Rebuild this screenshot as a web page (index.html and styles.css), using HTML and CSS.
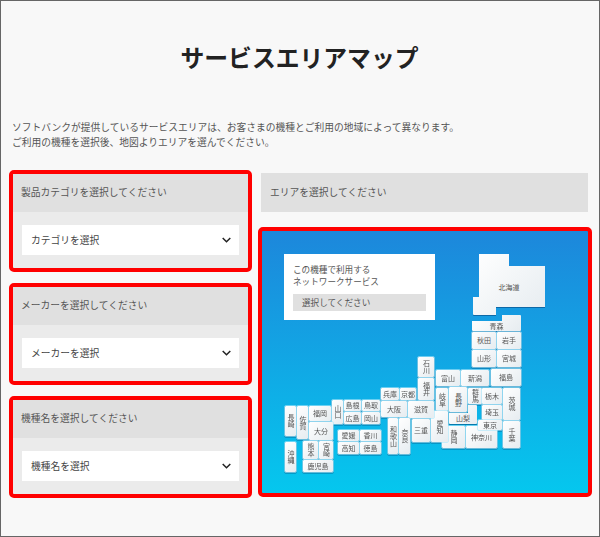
FILE: index.html
```html
<!DOCTYPE html>
<html>

<head>
    <meta charset="utf-8">
    <title>サービスエリアマップ</title>
    <link rel="stylesheet" href="styles.css">
</head>

<body>
    <div id="page">
        <h1>サービスエリアマップ</h1>
        <p class="lead">ソフトバンクが提供しているサービスエリアは、お客さまの機種とご利用の地域によって異なります。<br>ご利用の機種を選択後、地図よりエリアを選んでください。</p>
        <div class="columns">
            <div class="left">
                <div class="card">
                    <div class="card-head">製品カテゴリを選択してください</div>
                    <div class="card-body">
                        <div class="select">カテゴリを選択
                            <svg class="chevron" width="9" height="6" viewBox="0 0 9 6"><path d="M.7 1l3.8 3.8L8.3 1" /></svg>
                        </div>
                    </div>
                </div>
                <div class="card">
                    <div class="card-head">メーカーを選択してください</div>
                    <div class="card-body">
                        <div class="select">メーカーを選択
                            <svg class="chevron" width="9" height="6" viewBox="0 0 9 6"><path d="M.7 1l3.8 3.8L8.3 1" /></svg>
                        </div>
                    </div>
                </div>
                <div class="card">
                    <div class="card-head">機種名を選択してください</div>
                    <div class="card-body">
                        <div class="select">機種名を選択
                            <svg class="chevron" width="9" height="6" viewBox="0 0 9 6"><path d="M.7 1l3.8 3.8L8.3 1" /></svg>
                        </div>
                    </div>
                </div>
            </div>
            <div class="right">
                <div class="area-head">エリアを選択してください</div>
                <div class="map">
                    <div class="info">
                        <p>この機種で利用する<br>ネットワークサービス</p>
                        <div class="info-value">選択してください</div>
                    </div>
                    <div class="tiles">
                        <div class="tile hokkaido">北海道</div>
                        <div class="tile aomori">青森</div>
                        <div class="tile akita">秋田</div>
                        <div class="tile iwate">岩手</div>
                        <div class="tile yamagata">山形</div>
                        <div class="tile miyagi">宮城</div>
                        <div class="tile fukushima">福島</div>
                        <div class="tile niigata">新潟</div>
                        <div class="tile toyama">富山</div>
                        <div class="tile tate ishikawa">石川</div>
                        <div class="tile tate fukui">福井</div>
                        <div class="tile tate gifu">岐阜</div>
                        <div class="tile yamanashi">山梨</div>
                        <div class="tile tate nagano">長野</div>
                        <div class="tile tate gunma">群馬</div>
                        <div class="tile tochigi">栃木</div>
                        <div class="tile saitama">埼玉</div>
                        <div class="tile tate ibaraki">茨城</div>
                        <div class="tile tate chiba">千葉</div>
                        <div class="tile kanagawa">神奈川</div>
                        <div class="tile tokyo">東京</div>
                        <div class="tile tate shizuoka">静岡</div>
                        <div class="tile tate aichi">愛知</div>
                        <div class="tile mie">三重</div>
                        <div class="tile shiga">滋賀</div>
                        <div class="tile osaka">大阪</div>
                        <div class="tile hyogo">兵庫</div>
                        <div class="tile kyoto">京都</div>
                        <div class="tile tate wakayama">和歌山</div>
                        <div class="tile tate nara">奈良</div>
                        <div class="tile tottori">鳥取</div>
                        <div class="tile shimane">島根</div>
                        <div class="tile okayama">岡山</div>
                        <div class="tile hiroshima">広島</div>
                        <div class="tile tate yamaguchi">山口</div>
                        <div class="tile kagawa">香川</div>
                        <div class="tile ehime">愛媛</div>
                        <div class="tile tokushima">徳島</div>
                        <div class="tile kochi">高知</div>
                        <div class="tile oita">大分</div>
                        <div class="tile fukuoka">福岡</div>
                        <div class="tile tate saga">佐賀</div>
                        <div class="tile tate nagasaki">長崎</div>
                        <div class="tile tate kumamoto">熊本</div>
                        <div class="tile tate miyazaki">宮崎</div>
                        <div class="tile kagoshima">鹿児島</div>
                        <div class="tile tate okinawa">沖縄</div>
                    </div>
                </div>
            </div>
        </div>
    </div>
</body>

</html>
```

FILE: styles.css
```css
/* General Styles */
* {
    box-sizing: border-box;
}

html,
body {
    margin: 0;
    height: 100%;
}

body {
    color: #444;
    font-family: "Noto Sans CJK JP", "Noto Sans", sans-serif;
}

#page {
    height: 537px;
    padding: 0 7px 0 8px;
    background-color: #f8f8f8;
    border: 1px solid #666;
}

h1 {
    margin: 0;
    padding: 39px 2px 0 0;
    height: 119px;
    font-size: 23.8px;
    line-height: 34px;
    font-weight: bold;
    text-align: center;
    color: #222;
}

.lead {
    margin: 0 0 20px 3px;
    font-size: 9.75px;
    line-height: 15px;
    color: #555;
}

.columns {
    display: flex;
    gap: 6px;
}

/* Left column */
.left {
    width: 243px;
    display: flex;
    flex-direction: column;
    gap: 11px;
}

.card {
    height: 102px;
    border: 4px solid #f00;
    border-radius: 5px;
    background-color: #ebebeb;
}

.card-head {
    height: 38px;
    padding-left: 8px;
    background-color: #e0e0e0;
    font-size: 9.75px;
    line-height: 37px;
    color: #555;
}

.card-body {
    padding: 13px 9px 0 9px;
}

.select {
    height: 30px;
    padding: 0 8px 0 9px;
    display: flex;
    align-items: center;
    justify-content: space-between;
    background-color: #fff;
    font-size: 9.75px;
    color: #444;
}

.chevron path {
    fill: none;
    stroke: #222;
    stroke-width: 1.5;
}

/* Right column */
.right {
    width: 334px;
}

.area-head {
    height: 39px;
    margin: 3px 4px 15px 3px;
    padding-left: 9px;
    background-color: #e0e0e0;
    font-size: 9.75px;
    line-height: 38px;
    color: #555;
}

.map {
    position: relative;
    height: 270px;
    border: 4px solid #f00;
    border-radius: 5px;
    background: linear-gradient(#1d87db, #05c7ee);
}

.info {
    position: absolute;
    left: 22px;
    top: 23px;
    width: 151px;
    height: 66px;
    padding: 9px 9px 0 9px;
    background-color: #fff;
    font-size: 8.6px;
    color: #555;
}

.info p {
    margin: 0 0 7px 0;
    line-height: 12px;
}

.info-value {
    height: 17px;
    padding-left: 9px;
    background-color: #e0e0e0;
    line-height: 17px;
}

/* Prefecture tiles */
.tiles {
    filter: drop-shadow(0 1px 0 rgba(0, 30, 80, 0.4));
}

.tile {
    position: absolute;
    display: flex;
    align-items: center;
    justify-content: center;
    border-radius: 1px;
    background: linear-gradient(135deg, #fff, #e6ecf0);
    outline: 1px solid rgba(170, 230, 250, 0.6);
    font-size: 7px;
    line-height: 1;
    color: #555;
}

.tate {
    writing-mode: vertical-rl;
}

.hokkaido { left: 211px; top: 23px; width: 72px; height: 61px; padding-top: 5px; clip-path: polygon(6px 0, 36px 0, 36px 12px, 72px 12px, 72px 53px, 23px 53px, 23px 61px, 0 61px, 0 43px, 6px 43px); }
.aomori { left: 210px; top: 84px; width: 49px; height: 16px; padding-top: 6px; clip-path: polygon(30px 0, 49px 0, 49px 16px, 0 16px, 0 6px, 30px 6px); }
.akita { left: 210px; top: 101px; width: 24px; height: 17px; }
.iwate { left: 235px; top: 101px; width: 24px; height: 17px; }
.yamagata { left: 210px; top: 119px; width: 24px; height: 17px; }
.miyagi { left: 235px; top: 119px; width: 24px; height: 17px; }
.fukushima { left: 229px; top: 138px; width: 30px; height: 17px; }
.niigata { left: 199px; top: 139px; width: 28px; height: 16px; }
.toyama { left: 174px; top: 139px; width: 24px; height: 16px; }
.ishikawa { left: 156px; top: 126px; width: 16px; height: 20px; }
.fukui { left: 156px; top: 147px; width: 16px; height: 22px; }
.gifu { left: 174px; top: 157px; width: 12px; height: 23px; }
.nagano { left: 187px; top: 156px; width: 18px; height: 25px; }
.yamanashi { left: 187px; top: 174px; width: 28px; height: 19px; padding-top: 8px; clip-path: polygon(19px 0, 28px 0, 28px 19px, 0 19px, 0 8px, 19px 8px); }
.gunma { left: 206px; top: 157px; width: 14px; height: 16px; }
.tochigi { left: 220px; top: 157px; width: 20px; height: 16px; }
.saitama { left: 220px; top: 174px; width: 20px; height: 15px; }
.ibaraki { left: 241px; top: 157px; width: 17px; height: 32px; }
.chiba { left: 241px; top: 190px; width: 17px; height: 27px; }
.kanagawa { left: 204px; top: 195px; width: 31px; height: 22px; }
.tokyo { left: 216px; top: 189px; width: 24px; height: 10px; }
.shizuoka { left: 180px; top: 195px; width: 23px; height: 22px; }
.aichi { left: 169px; top: 180px; width: 17px; height: 31px; }
.mie { left: 150px; top: 188px; width: 18px; height: 23px; }
.shiga { left: 146px; top: 170px; width: 26px; height: 17px; }
.osaka { left: 119px; top: 170px; width: 26px; height: 16px; }
.hyogo { left: 119px; top: 157px; width: 18px; height: 12px; }
.kyoto { left: 138px; top: 157px; width: 16px; height: 12px; }
.wakayama { left: 126px; top: 187px; width: 10px; height: 36px; }
.nara { left: 137px; top: 187px; width: 11px; height: 36px; }
.tottori { left: 100px; top: 169px; width: 18px; height: 11px; }
.shimane { left: 82px; top: 169px; width: 17px; height: 11px; }
.okayama { left: 100px; top: 181px; width: 18px; height: 12px; }
.hiroshima { left: 82px; top: 181px; width: 17px; height: 12px; }
.yamaguchi { left: 70px; top: 169px; width: 11px; height: 24px; }
.kagawa { left: 98px; top: 199px; width: 21px; height: 11px; }
.ehime { left: 76px; top: 199px; width: 21px; height: 11px; }
.tokushima { left: 98px; top: 211px; width: 21px; height: 12px; }
.kochi { left: 76px; top: 211px; width: 21px; height: 12px; }
.oita { left: 47px; top: 191px; width: 24px; height: 18px; }
.fukuoka { left: 47px; top: 175px; width: 22px; height: 15px; }
.saga { left: 35px; top: 175px; width: 11px; height: 33px; }
.nagasaki { left: 23px; top: 175px; width: 11px; height: 30px; }
.kumamoto { left: 41px; top: 210px; width: 15px; height: 18px; }
.miyazaki { left: 57px; top: 210px; width: 14px; height: 18px; }
.kagoshima { left: 41px; top: 229px; width: 30px; height: 12px; }
.okinawa { left: 23px; top: 211px; width: 11px; height: 30px; }
```
